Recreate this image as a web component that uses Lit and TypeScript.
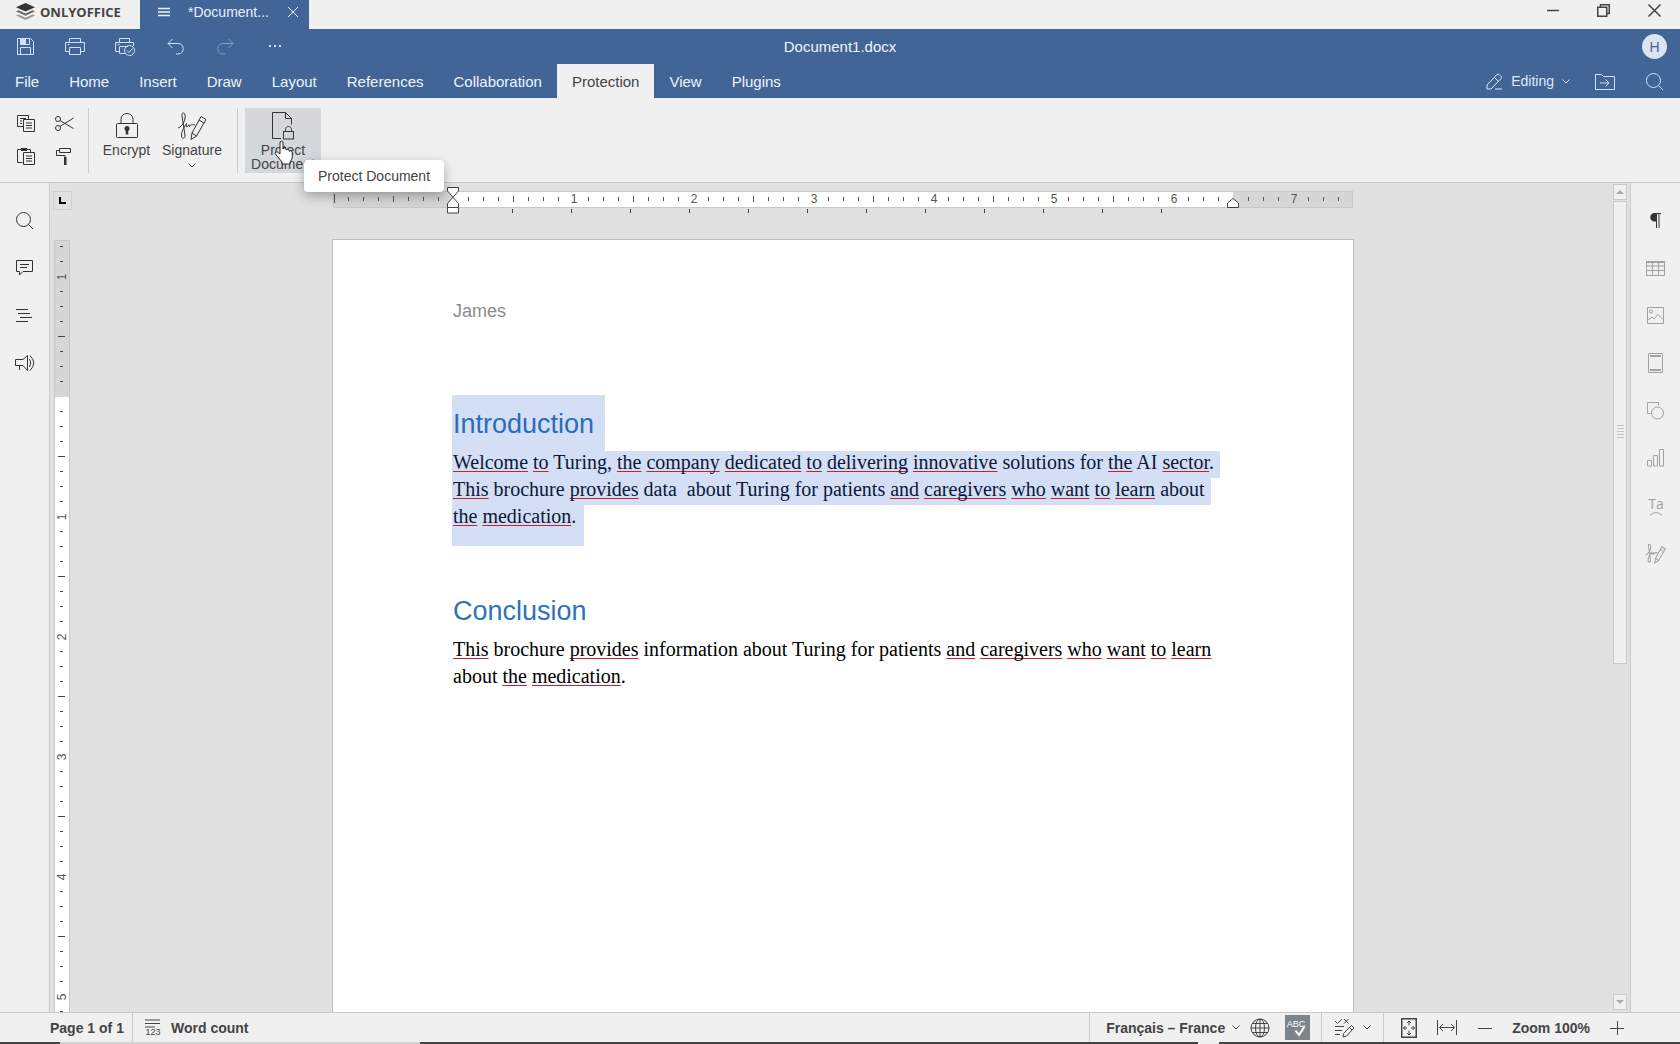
import { LitElement, html, svg, css, type SVGTemplateResult, type TemplateResult } from "lit";
import { customElement, state } from "lit/decorators.js";
import { classMap } from "lit/directives/class-map.js";

const icon = (w: number, h: number, body: SVGTemplateResult): TemplateResult => html`<svg
  class="icon" width=${w} height=${h} viewBox="0 0 ${w} ${h}" fill="none" stroke="currentColor" aria-hidden="true">${body}</svg>`;

const signature = svg`
  <path d="M1 17C5 16 9 9 8 4C7.5 1 4.5 1 5 5L8 24C8.5 28 5 28.5 4.5 25C4 20 8 15 9.500 12.500C9 16 9.500 17 11 15C12 13 12.500 13.500 12.500 15.500C14 13 15.500 13.500 18 14"/>
  <path d="M14 28.500L15 22L24 5.500L29 8.500L19.500 25Z M22 9L27 12 M15 22L19.500 25"/>`;

const chevron = icon(8, 5, svg`<path d="M.5 .5L4 4L7.500 .5"/>`);

const icons = {
  menu: icon(12, 10, svg`<path stroke-width="1.500" d="M0 1.500H12M0 5H12M0 8.500H12"/>`),
  close: icon(12, 12, svg`<path d="M1 1L11 11M11 1L1 11"/>`),
  minimize: icon(12, 12, svg`<path stroke-width="1.500" d="M0 6.500H12"/>`),
  restore: icon(13, 13, svg`<path stroke-width="1.500" d="M.75 3.250H9.750V12.250H.75ZM3.500 3V.75H12.250V9.500H10"/>`),
  closeWin: icon(13, 13, svg`<path stroke-width="1.500" d="M.5 .5L12.500 12.500M12.500 .5L.5 12.500"/>`),
  save: icon(17, 17, svg`<path d="M.5 .5H13.500L16.500 3.500V16.500H.5ZM3.500 .5V6.500H12.500V.5M3.500 16.500V9.500H13.500V16.500"/><path fill="currentColor" stroke="none" d="M4 1H9V6H4Z"/>`),
  print: icon(20, 17, svg`<path d="M4.500 4.500V.5H15.500V4.500M4.500 13.500H.5V4.500H19.500V13.500H15.500M4.500 9.500H15.500V16.500H4.500ZM2.500 6.500H4.500"/>`),
  quickPrint: icon(20, 18, svg`<path d="M4.500 4.500V.5H14.500V4.500M4.500 13.500H.5V4.500H18.500V8M10 15.500H4.500V8.500H13M2.500 6.500H4.500"/><circle cx="14.500" cy="12.500" r="5"/><path d="M12 12.500L14 14.500L17.500 10.500"/>`),
  undo: icon(17, 17, svg`<path d="M5.500 1L1 5.500L5.500 10M1 5.500H11C18 5.500 18 16 11 16H9"/>`),
  redo: icon(17, 17, svg`<path d="M11.500 1L16 5.500L11.500 10M16 5.500H6C-1 5.500 -1 16 6 16H8"/>`),
  more: icon(12, 3, svg`<path fill="currentColor" stroke="none" d="M0 0H2V2H0ZM5 0H7V2H5ZM10 0H12V2H10Z"/>`),
  edit: icon(17, 17, svg`<path d="M1 16V12L11 1.500Q12 .5 13 1.500L15 3.500Q16 4.500 15 5.500L5 16ZM8.500 4.500L12.500 8.500M9 16H16"/>`),
  folder: icon(20, 16, svg`<path d="M.5 15.500V.5H6.500L8.500 2.500H19.500V15.500ZM5 9H14M10.500 5.500L14 9L10.500 12.500"/>`),
  search: icon(18, 18, svg`<circle cx="7.500" cy="7.500" r="7"/><path d="M12.500 12.500L17 17"/>`),
  copy: icon(18, 17, svg`<path d="M6 11.500H.5V.5H11.500V4M3 3.500H9M3 6H5M3 8.500H5M6.500 4.500H17.500V16.500H6.500ZM9 8H15M9 10.500H15M9 13H15"/>`),
  cut: icon(19, 15, svg`<circle cx="3" cy="3" r="2.500"/><circle cx="3" cy="12" r="2.500"/><path d="M5 4.500L18.500 12.500M5 10.500L18.500 2"/>`),
  paste: icon(18, 18, svg`<path d="M5.500 15.500H.5V2.500H13.500V5M6.500 5.500H17.500V17.500H6.500ZM9 9H15M9 11.500H15M9 14H15"/><path fill="currentColor" stroke="none" d="M4 1H10V4H4Z"/>`),
  painter: icon(16, 18, svg`<path d="M3.500 1.500H14.500V5.500H3.500ZM3.500 3.500H.5V8.500H9V11"/><path fill="currentColor" stroke="none" d="M8 10H10.500V18H8Z"/>`),
  lock: icon(22, 25, svg`<path d="M5 10V6.500C5 -1.500 17 -1.500 17 6.500V10"/><rect x=".5" y="10.500" width="21" height="14" rx="1"/><circle cx="11" cy="15.500" r="2.500" fill="currentColor" stroke="none"/><path stroke-width="2.500" d="M11 16V21.500"/>`),
  sign: icon(30, 30, signature),
  protect: icon(22, 28, svg`<path d="M9 26.500H.5V.5H13.500L19.500 6.500V12.500M13.500 .5V6.500H19.500"/><rect x="11.500" y="19.500" width="10" height="7.500"/><path d="M13.500 19.500V17.500C13.500 13.500 19.500 13.500 19.500 17.500V19.500"/>`),
  comment: icon(17, 17, svg`<path d="M.5 .5H16.500V11.500H7L3.500 15V11.500H.5ZM4 4.500H13M4 7.500H11"/>`),
  headings: icon(17, 14, svg`<path d="M0 .5H12M2 4.500H14M4 8.500H16M0 12.500H12"/>`),
  speaker: icon(20, 16, svg`<path d="M.5 4.500H8L12.500 .5V15.500L8 10.500H.5ZM4.500 11V15M14.500 4Q17 8 14.500 12M15 .5Q22.500 8 15 15.500"/>`),
  pilcrow: icon(12, 16, svg`<path fill="currentColor" stroke="none" d="M11 0V1H9.500V15H8.500V1H7V15H6V8.500H4.500A4.250 4.250 0 0 1 4.500 0Z"/>`),
  table: icon(19, 15, svg`<path d="M.5 .5H18.500V14.500H.5ZM.5 5H18.500M.5 9.500H18.500M6.500 1V14M12.500 1V14"/><path stroke-width="2" d="M0 1H19"/>`),
  image: icon(17, 17, svg`<path d="M.5 .5H16.500V16.500H.5ZM1 13L5 10L7 12L11 7.500L16 12.500"/><circle cx="4" cy="4.500" r="1.500"/>`),
  headerFooter: icon(15, 20, svg`<path d="M.5 .5H14.500V19.500H.5Z"/><path stroke-width="2" d="M2 3H13M2 17H13"/>`),
  shape: icon(17, 18, svg`<path d="M3.500 11.500H.5V.5H11.500V3.500"/><circle cx="10.500" cy="11" r="6"/>`),
  chart: icon(17, 18, svg`<path d="M.5 11.500H4.500V17H.5ZM6.500 6.500H10.500V17H6.500ZM12.500 .5H16.500V17H12.500Z"/>`),
  textArt: icon(20, 26, svg`<text x="10" y="16" text-anchor="middle" font-family="Open Sans, sans-serif" font-size="14" fill="currentColor" stroke="none">Ta</text><path d="M4 22.500Q10 16.500 16 22.500"/>`),
  signSmall: html`<svg class="icon" width="21" height="21" viewBox="0 0 30 30" fill="none" stroke="currentColor" stroke-width="1.500" aria-hidden="true">${signature}</svg>`,
  wordCount: icon(16, 19, svg`<path d="M0 2H15M0 5.500H15M0 9H10"/><text x="8" y="17" text-anchor="middle" font-family="Liberation Sans, sans-serif" font-size="9" font-weight="normal" fill="currentColor" stroke="none">123</text>`),
  globe: icon(20, 20, svg`<circle cx="10" cy="10" r="9"/><ellipse cx="10" cy="10" rx="4.500" ry="9"/><path d="M10 1V19M1 10H19M2.500 5.500H17.500M2.500 14.500H17.500"/>`),
  spell: icon(23, 23, svg`<text x="10" y="11" text-anchor="middle" font-family="Liberation Sans, sans-serif" font-size="9" font-weight="normal" fill="currentColor" stroke="none">ABC</text><path stroke-width="2" d="M9.500 14.500L13 19L18.500 10.500"/>`),
  track: icon(20, 20, svg`<path d="M0 3L2.500 5.500L7 1M9 1L13.500 5.500M13.500 1L9 5.500M0 8.500H9M0 12.500H7M0 16.500H5M8 19L8.500 15.500L16.500 7.500L19 10L11.500 18ZM14.500 9.500L17 12"/>`),
  fitPage: icon(16, 20, svg`<path stroke-width="1.500" d="M.75 .75H15.250V19.250H.75Z"/><path d="M8 3V7.500M8 12.500V17M2.500 10H6M10 10H13.500M6 5L8 3L10 5M6 15L8 17L10 15M4.500 8L2.500 10L4.500 12M11.500 8L13.500 10L11.500 12"/>`),
  fitWidth: icon(20, 15, svg`<path d="M.5 0V15M19.500 0V15M2.500 7.500H17.500M6 4L2.500 7.500L6 11M14 4L17.500 7.500L14 11"/>`),
  minus: icon(14, 14, svg`<path d="M0 7.500H14"/>`),
  plus: icon(14, 14, svg`<path d="M0 7.500H14M7.500 0V14"/>`),
};

const MENU = ["File", "Home", "Insert", "Draw", "Layout", "References", "Collaboration", "Protection", "View", "Plugins"];

const LEFT_RAIL: [string, TemplateResult][] = [
  ["Find", icons.search], ["Comments", icons.comment], ["Headings", icons.headings], ["Feedback", icons.speaker],
];

const RIGHT_RAIL: [string, TemplateResult, boolean][] = [
  ["Paragraph settings", icons.pilcrow, true], ["Table settings", icons.table, false], ["Image settings", icons.image, false],
  ["Header and footer", icons.headerFooter, false], ["Shape settings", icons.shape, false], ["Chart settings", icons.chart, false],
  ["Text Art", icons.textArt, false], ["Signature settings", icons.signSmall, false],
];

/* Words between underscores are flagged by the spelling checker. */
const INTRO = [
  "_Welcome_ _to_ Turing, _the_ _company_ _dedicated_ _to_ _delivering_ _innovative_ solutions for _the_ AI _sector_.",
  "_This_ brochure _provides_ data \u00a0about Turing for patients _and_ _caregivers_ _who_ _want_ _to_ _learn_ about",
  "_the_ _medication_.",
];
const CONCLUSION = [
  "_This_ brochure _provides_ information about Turing for patients _and_ _caregivers_ _who_ _want_ _to_ _learn_",
  "about _the_ _medication_.",
];

const INCH = 120;
const MARGIN = 120;
const PAGE_WIDTH = 1020;
const PAGE_RIGHT = 900;
const TAB_STOP = 59;

const range = (n: number) => Array.from({ length: n }, (_, i) => i);

@customElement("horizontal-ruler")
export class HorizontalRuler extends LitElement {
  static styles = css`
    :host { display: block; }
    svg { display: block; overflow: visible; }
    text { font: 12px "Liberation Sans", Arial, sans-serif; fill: #555; }
  `;

  render() {
    const marks = range(PAGE_WIDTH / 15).slice(1).map((i) => {
      const x = i * 15;
      const offset = x - MARGIN;
      if (offset === 0 || x === PAGE_RIGHT) return svg``;
      if (offset % INCH === 0) return svg`<text x=${x + 1} y="17" text-anchor="middle">${Math.abs(offset / INCH)}</text>`;
      const half = offset % (INCH / 2) === 0;
      return svg`<path stroke="#555" d=${`M${x + 0.5} ${half ? 10 : 11}V${half ? 16 : 15}`}></path>`;
    });
    const stops = range(13).slice(1).map((i) =>
      svg`<path stroke="#444" d=${`M${MARGIN + i * TAB_STOP + 0.5} 23V27`}></path>`);
    return html`<svg width=${PAGE_WIDTH} height="32" viewBox="0 0 ${PAGE_WIDTH} 32" role="img" aria-label="Horizontal ruler">
      <rect x="0.5" y="5.500" width="1019" height="16" fill="#d6d6d6" stroke="#c8c8c8"></rect>
      <rect x="120" y="6" width="780" height="15" fill="#fff"></rect>
      <path stroke="#555" d="M1.500 8V17"></path>
      ${marks}${stops}
      <g fill="#fff" stroke="#444">
        <path d="M114.500 1.500H125.500V5L114.500 17.500V21.500H125.500V17.500L114.500 5Z"></path>
        <path d="M114.500 21.500H125.500V27H114.500Z"></path>
        <path d="M894.500 21.500V17L900 12.500L905.500 17V21.500Z"></path>
      </g>
    </svg>`;
  }
}

@customElement("vertical-ruler")
export class VerticalRuler extends LitElement {
  static styles = css`
    :host { display: block; flex: 1; min-height: 0; overflow: hidden; }
    svg { display: block; }
    text { font: 12px "Liberation Sans", Arial, sans-serif; fill: #555; }
  `;

  @state() private length = 0;
  private observer = new ResizeObserver(() => (this.length = this.clientHeight));

  connectedCallback() {
    super.connectedCallback();
    this.observer.observe(this);
  }

  disconnectedCallback() {
    this.observer.disconnect();
    super.disconnectedCallback();
  }

  render() {
    const origin = 156;
    const height = this.length;
    const marks = range(Math.ceil(height / 15)).map((i) => {
      const offset = (i - 10) * 15;
      const y = origin + offset;
      if (offset === 0) return svg``;
      if (offset % INCH === 0)
        return svg`<text transform=${`translate(12 ${y + 1}) rotate(-90)`} text-anchor="middle">${Math.abs(offset / INCH)}</text>`;
      const half = offset % (INCH / 2) === 0;
      return svg`<path stroke="#444" d=${`M${half ? 4 : 6} ${y + 0.5}H${half ? 11 : 9}`}></path>`;
    });
    return html`<svg width="16" height=${height} role="img" aria-label="Vertical ruler">
      <rect x="0.5" y="0.5" width="15" height=${height} fill="#fff" stroke="#c8c8c8"></rect>
      <rect x="1" y="1" width="14" height="156" fill="#d6d6d6"></rect>
      ${marks}
    </svg>`;
  }
}

@customElement("app-root")
export class AppRoot extends LitElement {
  static styles = css`
    :host {
      display: flex; flex-direction: column; height: 100vh; overflow: hidden;
      font-family: "Liberation Sans", Arial, sans-serif; font-size: 14px; line-height: 16px;
      color: #444; background: #f0f0f0;
    }
    * { box-sizing: border-box; }
    button { font: inherit; color: inherit; background: none; border: 0; padding: 0; margin: 0; display: flex; align-items: center; justify-content: center; }
    .icon { display: block; flex: none; overflow: visible; }
    .spacer { flex: 1; }

    .titlebar { display: flex; height: 29px; flex: none; }
    .brand { display: flex; align-items: center; gap: 5px; width: 140px; padding: 0 0 6px 16px; font: bold 13px/18px "Open Sans", sans-serif; color: #444; }
    .doc-tab { display: flex; align-items: center; width: 169px; padding: 0 10px 6px 18px; background: #416596; color: #e8f0fb; }
    .doc-tab .name { margin-left: 18px; }
    .doc-tab .close { margin-left: auto; }
    .window-controls { display: flex; padding-bottom: 9px; }
    .window-controls button { width: 51px; }

    .header { flex: none; background: #416596; color: #eef4fd; font-size: 15px; line-height: 18px; }
    .quick { display: grid; grid-template-columns: 1fr auto 1fr; align-items: center; height: 35px; }
    .quick-tools { display: flex; }
    .quick-tools button { width: 50px; height: 35px; color: #cfe0f7; }
    .quick-tools .dim { color: #819cc4; }
    .file-name { font: inherit; margin: 0; }
    .avatar { justify-self: end; width: 25px; height: 25px; margin-right: 13px; border-radius: 50%; background: #dbe4f1; color: #4a648f; font-size: 14px; }
    .tabs { display: flex; height: 34px; }
    .tabs .tab { padding: 2px 15px 0; }
    .tabs .active { background: #f0f0f0; color: #444; }
    .mode { gap: 8px; font-size: 14px; margin-right: 10px; color: #dce8f9; }
    .tabs .square { width: 50px; padding-top: 1px; color: #cfe0f7; }

    .toolbar { position: relative; z-index: 2; display: flex; flex: none; height: 85px; padding: 10px 0 9px; border-bottom: 1px solid #c8c8c8; }
    .clipboard { display: grid; grid-template-columns: 38px 38px; grid-template-rows: 30px 36px; padding-left: 7px; width: 88px; color: #333; }
    .divider { width: 1px; background: #cbcbcb; }
    .big { flex-direction: column; justify-content: flex-start; line-height: 14px; height: 65px; }
    .big .art { display: flex; align-items: center; height: 35px; color: #333; }
    .encrypt { width: 75px; }
    .sign { width: 56px; }
    .sign .arrow { display: flex; margin-top: 6px; }
    .big-group { display: flex; width: 148px; }
    .protect { width: 76px; margin-left: 7px; background: #d5d8db; position: relative; }
    .tooltip { position: absolute; left: 59px; top: 52px; padding: 8px 14px; background: #fff; border-radius: 4px; box-shadow: 0 4px 12px rgba(0, 0, 0, .3); white-space: nowrap; }
    .pointer { position: absolute; left: 29px; top: 32px; }

    .workspace { display: grid; grid-template-columns: 50px 23px minmax(0, 1fr) 17px 50px; flex: 1; min-height: 0; background: #e1e1e1; }
    .rail { background: #f0f0f0; padding-top: 14px; }
    .rail.left { border-right: 1px solid #c8c8c8; color: #333; }
    .rail.right { border-left: 1px solid #c8c8c8; color: #a2a2a2; }
    .rail ul { list-style: none; margin: 0; padding: 0; display: grid; grid-auto-rows: 1fr; height: 380px; }
    .rail.left ul { height: 190px; }
    .rail button { width: 100%; height: 100%; }
    .rail .on { color: #333; }
    .gutter { display: flex; flex-direction: column; min-height: 0; padding: 8px 0 0 4px; gap: 30px; }
    .tab-kind { width: 19px; height: 19px; margin-left: -1px; border: 1px solid #cfcfcf; flex: none; }
    .canvas { display: flex; flex-direction: column; align-items: center; overflow: hidden; min-height: 0; padding-top: 3px; }
    .page { width: 1022px; flex: 1 0 auto; margin-top: 21px; padding: 61px 120px 0; background: #fff; border: 1px solid #bdbdbd; border-bottom: 0; }
    .scroll { display: flex; flex-direction: column; padding: 1px 3px 2px 0; gap: 1px; min-height: 0; }
    .scroll button { height: 16px; border: 1px solid #cbcbcb; background: #f0f0f0; flex: none; color: #aaa; }
    .track { flex: 1; min-height: 0; }
    .thumb { height: 58.4%; border: 1px solid #cbcbcb; background: #f0f0f0; display: flex; align-items: center; justify-content: center; color: #c4c4c4; }

    .running { margin: 0 0 74px; font-size: 18px; line-height: 20px; color: #8c8c8c; }
    .title { width: fit-content; margin: 0; padding: 14px 0 12px; font-size: 27px; line-height: 30px; font-weight: normal; color: #2e74b5; }
    .text { margin: 0; font-family: "Liberation Serif", "Times New Roman", serif; font-size: 20px; color: #000; }
    .line { display: block; width: fit-content; line-height: 22px; padding-bottom: 5px; white-space: nowrap; }
    .flagged { text-decoration: underline #c9202f 1px; text-underline-offset: 2px; text-decoration-skip-ink: none; }
    .section { margin-bottom: 36px; }
    .selected .title, .selected .line { background: #d4dff5; margin-left: -1px; padding-left: 1px; }
    .selected .title { padding-right: 11px; color: #2a6cbc; }
    .selected .line { padding-right: 6px; color: #0b1838; }
    .selected .line:last-child { padding-right: 8px; padding-bottom: 19px; }

    .status { display: flex; flex: none; height: 30px; border-top: 1px solid #c8c8c8; font-weight: bold; }
    .status > * { flex: none; }
    .status .spacer { flex: 1; }
    .page-no { padding-left: 50px; width: 132px; }
    .count { gap: 10px; padding-left: 12px; }
    .status .page-no { justify-content: flex-start; }
    .language { gap: 7px; padding: 0 10px 0 16px; }
    .spelling { align-self: center; width: 25px; height: 25px; margin: 0 11px 0 15px; background: #7d858c; color: #fff; }
    .changes { gap: 8px; width: 61px; }
    .fit { width: 38px; }
    .fit.first { margin-left: 6px; }
    .fit.last { margin-right: 2px; }
    .zoom-step { width: 34px; }
    .zoom { padding: 0 10px; align-self: center; white-space: nowrap; }
    .zoom-step.in { margin-right: 46px; }
    .dock { flex: none; height: 2px; background: linear-gradient(90deg, #444 60px, #d4d4d4 60px 420px, #444 420px 1198px, #f0f0f0 1198px 1219px, #444 1219px); }
  `;

  @state() private activeTab = "Protection";

  private line(source: string) {
    return html`<span class="line">${source.split("_").map((part, i) => (i % 2 ? html`<span class="flagged">${part}</span>` : part))}</span>`;
  }

  render() {
    return html`
      <div class="titlebar">
        <div class="brand">
          <svg class="icon" width="19" height="18" viewBox="0 0 19 18" aria-hidden="true">
            <path fill="#333" d="M9.500 0L19 4.200L9.500 8.500L0 4.200Z"/>
            <path fill="#666" d="M0 8.200L2.500 7.200L9.500 10.500L16.500 7.200L19 8.200L9.500 12.700Z"/>
            <path fill="#999" d="M0 12.400L2.500 11.400L9.500 14.700L16.500 11.400L19 12.400L9.500 17Z"/>
          </svg>
          <span>ONLYOFFICE</span>
        </div>
        <div class="doc-tab">${icons.menu}<span class="name">*Document...</span><button class="close" aria-label="Close tab">${icons.close}</button></div>
        <div class="spacer"></div>
        <div class="window-controls">
          <button aria-label="Minimize">${icons.minimize}</button>
          <button aria-label="Restore">${icons.restore}</button>
          <button aria-label="Close">${icons.closeWin}</button>
        </div>
      </div>

      <header class="header">
        <div class="quick">
          <div class="quick-tools">
            <button aria-label="Save">${icons.save}</button>
            <button aria-label="Print">${icons.print}</button>
            <button aria-label="Quick print">${icons.quickPrint}</button>
            <button aria-label="Undo">${icons.undo}</button>
            <button class="dim" aria-label="Redo">${icons.redo}</button>
            <button aria-label="More">${icons.more}</button>
          </div>
          <h1 class="file-name">Document1.docx</h1>
          <button class="avatar" aria-label="Account">H</button>
        </div>
        <nav class="tabs">
          ${MENU.map((name) => html`<button class=${classMap({ tab: true, active: name === this.activeTab })}
            @click=${() => (this.activeTab = name)}>${name}</button>`)}
          <div class="spacer"></div>
          <button class="mode">${icons.edit}<span>Editing</span>${chevron}</button>
          <button class="square" aria-label="Open file location">${icons.folder}</button>
          <button class="square" aria-label="Search">${icons.search}</button>
        </nav>
      </header>

      <div class="toolbar">
        <div class="clipboard">
          <button aria-label="Copy">${icons.copy}</button>
          <button aria-label="Cut">${icons.cut}</button>
          <button aria-label="Paste">${icons.paste}</button>
          <button aria-label="Copy style">${icons.painter}</button>
        </div>
        <div class="divider"></div>
        <div class="big-group">
          <button class="big encrypt"><span class="art">${icons.lock}</span><span>Encrypt</span></button>
          <button class="big sign"><span class="art">${icons.sign}</span><span>Signature</span><span class="arrow">${chevron}</span></button>
        </div>
        <div class="divider"></div>
        <div class="protect">
          <button class="big" aria-describedby="protect-tip"><span class="art">${icons.protect}</span><span>Protect Document</span></button>
          <div class="tooltip" id="protect-tip" role="tooltip">Protect Document</div>
          <svg class="pointer" width="20" height="25" viewBox="0 0 20 25" aria-hidden="true">
            <path fill="#fff" stroke="#222" d="M6 14V3Q6 1 7.500 1T9 3V9Q9.500 7.500 11 8Q12.200 8.300 12.200 10Q13 8.700 14.300 9.300Q15.300 9.800 15.300 11.300Q16 10.300 17.300 11Q18.300 11.500 18.300 13V17Q18.300 19 16 22V24H8V22L3 16Q0 13 1.500 12T6 14Z"/>
          </svg>
        </div>
      </div>

      <main class="workspace">
        <nav class="rail left">
          <ul>${LEFT_RAIL.map(([label, art]) => html`<li><button aria-label=${label}>${art}</button></li>`)}</ul>
        </nav>
        <div class="gutter">
          <button class="tab-kind" aria-label="Left tab">
            <svg class="icon" width="7" height="7" viewBox="0 0 7 7" aria-hidden="true"><path fill="none" stroke="#000" stroke-width="2" d="M1 0V6H7"/></svg>
          </button>
          <vertical-ruler></vertical-ruler>
        </div>
        <div class="canvas">
          <horizontal-ruler></horizontal-ruler>
          <article class="page">
            <p class="running">James</p>
            <section class="section selected">
              <h2 class="title">Introduction</h2>
              <p class="text">${INTRO.map((l) => this.line(l))}</p>
            </section>
            <section class="section">
              <h2 class="title">Conclusion</h2>
              <p class="text">${CONCLUSION.map((l) => this.line(l))}</p>
            </section>
          </article>
        </div>
        <div class="scroll">
          <button aria-label="Scroll up">${icon(8, 4, svg`<path fill="currentColor" stroke="none" d="M4 0L8 4H0Z"/>`)}</button>
          <div class="track">
            <div class="thumb">${icon(7, 14, svg`<path d="M0 .5H7M0 3.500H7M0 6.500H7M0 9.500H7M0 12.500H7"/>`)}</div>
          </div>
          <button aria-label="Scroll down">${icon(8, 4, svg`<path fill="currentColor" stroke="none" d="M0 0H8L4 4Z"/>`)}</button>
        </div>
        <nav class="rail right">
          <ul>${RIGHT_RAIL.map(([label, art, on]) => html`<li><button class=${classMap({ on })} aria-label=${label}>${art}</button></li>`)}</ul>
        </nav>
      </main>

      <footer class="status">
        <button class="page-no">Page 1 of 1</button>
        <div class="divider"></div>
        <button class="count">${icons.wordCount}<span>Word count</span></button>
        <div class="spacer"></div>
        <div class="divider"></div>
        <button class="language"><span>Français – France</span>${chevron}</button>
        <button aria-label="Document language">${icons.globe}</button>
        <button class="spelling" aria-label="Spell checking">${icons.spell}</button>
        <div class="divider"></div>
        <button class="changes" aria-label="Track changes">${icons.track}${chevron}</button>
        <div class="divider"></div>
        <button class="fit first" aria-label="Fit to page">${icons.fitPage}</button>
        <button class="fit last" aria-label="Fit to width">${icons.fitWidth}</button>
        <button class="zoom-step" aria-label="Zoom out">${icons.minus}</button>
        <span class="zoom">Zoom 100%</span>
        <button class="zoom-step in" aria-label="Zoom in">${icons.plus}</button>
      </footer>
      <div class="dock"></div>
    `;
  }
}
